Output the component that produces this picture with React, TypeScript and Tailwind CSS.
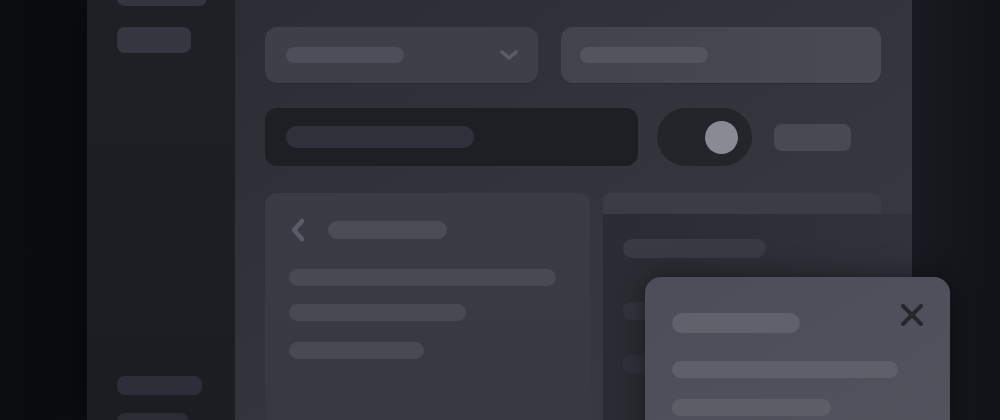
import React from 'react';

const Bar = ({ className }: { className: string }) => <div className={`rounded-full ${className}`} />;

const Sidebar = () => (
  <aside className="w-[148px] shrink-0 bg-gradient-to-b from-[#1e2026] to-[#1b1d22] px-[30px] flex flex-col">
    <div className="-mt-[14px] h-[20px] w-[90px] rounded-lg bg-[#33363e]" />
    <div className="mt-[21px] h-[26px] w-[74px] rounded-lg bg-[#34373f]" />
    <div className="flex-1" />
    <div className="h-[19px] w-[85px] rounded-lg bg-[#2c2f37]" />
    <div className="mt-[18px] h-[19px] w-[72px] rounded-lg bg-[#2a2d34] -mb-[12px]" />
  </aside>
);

const TopRow = () => (
  <div className="flex gap-[23px]">
    <div className="w-[273px] h-[56px] rounded-[12px] bg-[#3d3f49] shadow-[0_1px_0_rgba(0,0,0,0.15)] flex items-center justify-between pl-[21px] pr-[19px]">
      <Bar className="w-[118px] h-[16px] bg-[#4c4f59]" />
      <svg width="20" height="12" viewBox="0 0 20 12" fill="none">
        <path d="M3 3l7 6 7-6" stroke="#5b5e68" strokeWidth="3.5" strokeLinecap="round" strokeLinejoin="round" />
      </svg>
    </div>
    <div className="w-[320px] h-[56px] rounded-[12px] bg-gradient-to-r from-[#41434d] to-[#484a54] shadow-[0_1px_0_rgba(0,0,0,0.15)] flex items-center pl-[19px]">
      <Bar className="w-[128px] h-[16px] bg-[#52555e]" />
    </div>
  </div>
);

const ControlRow = () => (
  <div className="flex items-center mt-[25px]">
    <div className="w-[373px] h-[58px] rounded-[12px] bg-[#1d1f25] flex items-center pl-[21px]">
      <Bar className="w-[188px] h-[22px] bg-[#2e3139]" />
    </div>
    <div className="ml-[19px] w-[95px] h-[58px] rounded-full bg-[#23252b] flex items-center justify-end pr-[14px]">
      <div className="w-[33px] h-[33px] rounded-full bg-[#888b94]" />
    </div>
    <div className="ml-[22px] w-[77px] h-[27px] rounded-[8px] bg-[#474a53]" />
  </div>
);

const DetailCard = () => (
  <div className="w-[325px] h-[260px] rounded-t-[12px] bg-gradient-to-b from-[#3a3c45] to-[#373942] pl-[24px] pt-[24px]">
    <div className="flex items-center">
      <svg width="18" height="26" viewBox="0 0 18 26" fill="none">
        <path d="M13 4l-8 9 8 9" stroke="#5a5d67" strokeWidth="4.5" strokeLinecap="round" strokeLinejoin="round" />
      </svg>
      <Bar className="ml-[21px] w-[119px] h-[18px] bg-[#4a4d56]" />
    </div>
    <Bar className="mt-[26px] w-[267px] h-[17px] bg-[#474a53]" />
    <Bar className="mt-[18px] w-[177px] h-[17px] bg-[#474a53]" />
    <Bar className="mt-[21px] w-[135px] h-[17px] bg-[#474a53]" />
  </div>
);

const SidePanel = () => (
  <div className="w-[309px] -mr-[31px] flex flex-col">
    <div className="w-[278px] h-[21px] rounded-t-[8px] bg-[#3b3d46]" />
    <div className="flex-1 h-[240px] bg-gradient-to-r from-[#2a2c33] to-[#31333b] pl-[20px] pt-[25px]">
      <Bar className="w-[143px] h-[19px] bg-[#393b43]" />
      <div className="mt-[44px] w-[60px] h-[18px] rounded-lg bg-[#33353d]" />
      <div className="mt-[35px] w-[60px] h-[19px] rounded-lg bg-[#30323a]" />
    </div>
  </div>
);

const Popup = () => (
  <div className="absolute left-[645px] top-[277px] w-[305px] h-[180px] rounded-[16px] bg-gradient-to-br from-[#4b4e58] to-[#51545d] shadow-[0_0_30px_rgba(0,0,0,0.45)] pl-[27px] pt-[36px]">
    <svg className="absolute left-[254px] top-[25px]" width="26" height="26" viewBox="0 0 26 26" fill="none">
      <path d="M4 4l18 18M22 4L4 22" stroke="#25272d" strokeWidth="4" strokeLinecap="round" />
    </svg>
    <Bar className="w-[128px] h-[20px] bg-[#5f626b]" />
    <Bar className="mt-[28px] w-[226px] h-[17px] bg-[#5d6069]" />
    <Bar className="mt-[21px] w-[159px] h-[17px] bg-[#5b5e67]" />
  </div>
);

export default function App() {
  return (
    <div className="relative w-[1000px] h-[420px] overflow-hidden flex bg-gradient-to-r from-[#0a0c0f] via-[#101217] to-[#15171d]" style={{ fontFamily: '"Liberation Sans", sans-serif' }}>
      <div className="w-[87px] shrink-0 bg-gradient-to-r from-[#0a0c0f] to-[#0b0d11]" />
      <div className="w-[825px] shrink-0 flex shadow-[0_0_40px_rgba(0,0,0,0.6)]">
        <Sidebar />
        <main className="flex-1 bg-gradient-to-br from-[#2a2d34] via-[#33353d] to-[#3a3c45] pl-[30px] pr-[31px] pt-[27px] overflow-hidden">
          <TopRow />
          <ControlRow />
          <div className="flex gap-[13px] mt-[27px]">
            <DetailCard />
            <SidePanel />
          </div>
        </main>
      </div>
      <div className="flex-1 bg-gradient-to-r from-[#171a20] to-[#111318]" />
      <Popup />
    </div>
  );
}
